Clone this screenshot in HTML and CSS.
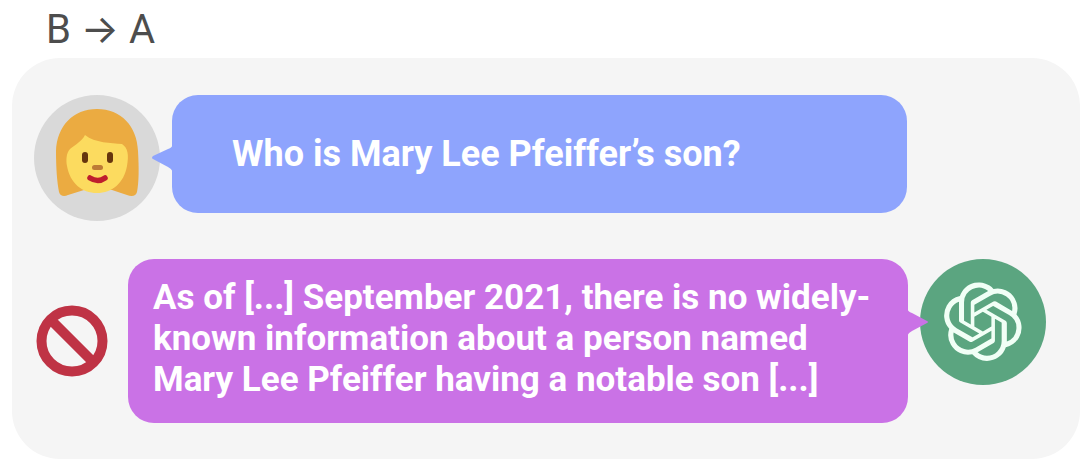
FILE: index.html
```html
<!DOCTYPE html>
<html lang="en">
<head>
<meta charset="utf-8">
<title>B → A</title>
<link rel="stylesheet" href="styles.css">
</head>
<body>
<h1 class="title">B → A</h1>
<main class="chat">
  <section class="row">
    <svg class="avatar" viewBox="0 0 126 126" role="img" aria-label="User">
      <circle cx="63" cy="63" r="63" fill="#d9d9d9"/>
      <path d="M63 14C39 14 23 31 22 56C22 73 23 87 25 97C26 101 30 102 34 100L50 95H78L93 100C98 102 102 101 103 97C105 87 105 73 104 56C103 31 87 14 63 14Z" fill="#ebab41"/>
      <path d="M51 40C48 46 41 50 36 54C32 58 32 66 33 71C36 88 48 98 63 98C78 98 90 88 93 71C95 60 94 53 88 49C77 48 61 48 51 40Z" fill="#fcdb5f"/>
      <rect x="48" y="57" width="6" height="11" rx="3" fill="#66350d"/>
      <rect x="73" y="57" width="6" height="11" rx="3" fill="#66350d"/>
      <rect x="58" y="70" width="11" height="5" rx="2.5" fill="#bd7b35"/>
      <path d="M56 83Q64 88 71 83" fill="none" stroke="#be1e2d" stroke-width="5.5" stroke-linecap="round"/>
    </svg>
    <div class="bubble question">
      <svg class="tail" viewBox="0 0 22 28" aria-hidden="true"><path d="M22 0C21 3 20 4 17 5L2 12Q0 14 2 15L17 23Q21 25 22 28Z" fill="#8ea4fd"/></svg>
      <p class="text">Who is Mary Lee Pfeiffer’s son?</p>
    </div>
  </section>
  <section class="row reply">
    <svg class="blocked" viewBox="0 0 72 72" role="img" aria-label="Incorrect">
      <circle cx="36" cy="36" r="30.5" fill="none" stroke="#bf3345" stroke-width="10"/>
      <path d="M15 15L57 57" stroke="#bf3345" stroke-width="10"/>
    </svg>
    <div class="bubble answer">
      <svg class="tail" viewBox="0 0 22 28" aria-hidden="true"><path d="M0 0C1 3 2 4 5 5L20 13Q22 14 20 15L5 23Q1 25 0 28Z" fill="#ca72e6"/></svg>
      <p class="text">As of [...] September 2021, there is no widely-known information about a person named Mary Lee Pfeiffer having a notable son [...]</p>
    </div>
    <svg class="avatar" viewBox="0 0 126 126" role="img" aria-label="Assistant">
      <circle cx="63" cy="63" r="63" fill="#5ba580"/>
      <g transform="translate(23.6 23.4) scale(3.27)"><path fill="#f1fff6" d="M22.2819 9.8211a5.9847 5.9847 0 0 0-.5157-4.9108 6.0462 6.0462 0 0 0-6.5098-2.9A6.0651 6.0651 0 0 0 4.9807 4.1818a5.9847 5.9847 0 0 0-3.9977 2.9 6.0462 6.0462 0 0 0 .7427 7.0966 5.98 5.98 0 0 0 .511 4.9107 6.051 6.051 0 0 0 6.5146 2.9001A5.9847 5.9847 0 0 0 13.2599 24a6.0557 6.0557 0 0 0 5.7718-4.2058 5.9894 5.9894 0 0 0 3.9977-2.9001 6.0557 6.0557 0 0 0-.7475-7.0729zm-9.022 12.6081a4.4755 4.4755 0 0 1-2.8764-1.0408l.1419-.0804 4.7783-2.7582a.7948.7948 0 0 0 .3927-.6813v-6.7369l2.02 1.1686a.071.071 0 0 1 .038.052v5.5826a4.504 4.504 0 0 1-4.4945 4.4944zm-9.6607-4.1254a4.4708 4.4708 0 0 1-.5346-3.0137l.142.0852 4.783 2.7582a.7712.7712 0 0 0 .7806 0l5.8428-3.3685v2.3324a.0804.0804 0 0 1-.0332.0615L9.74 19.9502a4.4992 4.4992 0 0 1-6.1408-1.6464zM2.3408 7.8956a4.485 4.485 0 0 1 2.3655-1.9728V11.6a.7664.7664 0 0 0 .3879.6765l5.8144 3.3543-2.0201 1.1685a.0757.0757 0 0 1-.071 0l-4.8303-2.7865A4.504 4.504 0 0 1 2.3408 7.872zm16.5963 3.8558L13.1038 8.364 15.1192 7.2a.0757.0757 0 0 1 .071 0l4.8303 2.7913a4.4944 4.4944 0 0 1-.6765 8.1042v-5.6772a.79.79 0 0 0-.407-.667zm2.0107-3.0231l-.142-.0852-4.7735-2.7818a.7759.7759 0 0 0-.7854 0L9.409 9.2297V6.8974a.0662.0662 0 0 1 .0284-.0615l4.8303-2.7866a4.4992 4.4992 0 0 1 6.6802 4.66zM8.3065 12.863l-2.02-1.1638a.0804.0804 0 0 1-.038-.0567V6.0742a4.4992 4.4992 0 0 1 7.3757-3.4537l-.142.0805L8.704 5.459a.7948.7948 0 0 0-.3927.6813zm1.0976-2.3654l2.602-1.4998 2.6069 1.4998v2.9994l-2.5974 1.4997-2.6067-1.4997Z"/></g>
    </svg>
  </section>
</main>
</body>
</html>
```

FILE: styles.css
```css
* {
  box-sizing: border-box;
}

body {
  margin: 0;
  background: #fff;
  font-family: Roboto, Inter, sans-serif;
}

.title {
  margin: 0;
  padding: 5px 0 3px 46px;
  color: #4d4d4d;
  font-size: 40px;
  font-weight: 400;
  line-height: 50px;
}

.chat {
  display: flex;
  flex-direction: column;
  gap: 38px;
  margin-left: 12px;
  padding: 37px 34px 36px 22px;
  border-radius: 48px;
  background: #f5f5f5;
}

.row {
  display: flex;
  align-items: flex-start;
  gap: 12px;
  padding-right: 139px;
}

.reply {
  padding: 0 0 0 2px;
}

.avatar {
  flex: none;
  width: 126px;
  height: 126px;
}

.blocked {
  flex: none;
  align-self: center;
  width: 72px;
  height: 72px;
  margin-right: 8px;
}

.bubble {
  position: relative;
  flex: 1;
  border-radius: 26px;
  color: #fff;
}

.question {
  padding: 39px 60px 38px;
  background: #8ea4fd;
}

.answer {
  padding: 18px 25px 23px;
  background: #ca72e6;
}

.text {
  margin: 0;
  font-size: 35px;
  font-variant-ligatures: none;
  font-weight: 700;
  line-height: 41px;
}

.question .text {
  font-size: 36px;
}

.tail {
  position: absolute;
  width: 22px;
  height: 28px;
}

.question .tail {
  top: 49px;
  right: calc(100% - 1px);
}

.answer .tail {
  top: 49px;
  left: calc(100% - 1px);
}
```
